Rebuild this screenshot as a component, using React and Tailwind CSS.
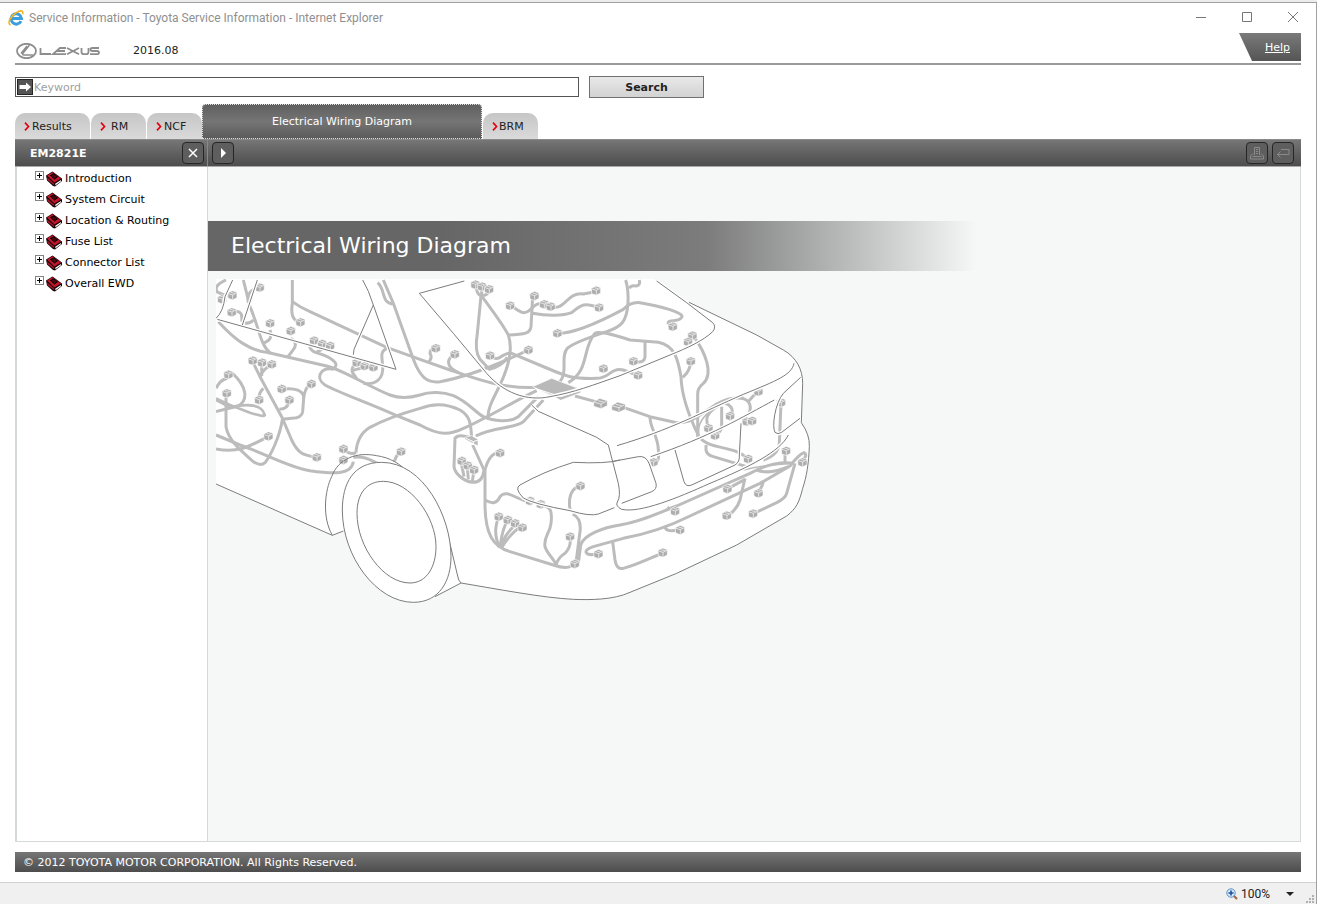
// src/App.jsx
import React, { useState } from "react";

const tabs = [
  { id: "results", label: "Results", width: "w-[75px]", gap: "gap-[2px]" },
  { id: "rm", label: "RM", width: "w-[55px]", gap: "gap-[5px]" },
  { id: "ncf", label: "NCF", width: "w-[55px]", gap: "gap-[2px]" },
  { id: "ewd", label: "Electrical Wiring Diagram", active: true },
  { id: "brm", label: "BRM", width: "w-[55px]", gap: "gap-px" },
];

const books = ["Introduction", "System Circuit", "Location & Routing", "Fuse List", "Connector List", "Overall EWD"];

// harness runs, three drawing units to a pixel
const wires = [
  "M25 155C80 215 120 240 170 247L350 288C400 300 480 352 540 375Q580 390 630 375C660 364 700 366 730 377C770 393 800 430 820 440C850 454 900 458 925 440L985 380",
  "M100 30L120 110C150 180 150 225 182 250",
  "M247 30V100Q240 145 262 154",
  "M247 95Q270 112 300 125L530 232L630 268L720 300C790 322 870 357 980 352",
  "M520 30L550 100L610 268C630 320 650 340 690 335Q800 315 955 240",
  "M503 38C528 60 512 98 548 102",
  "M372 298C330 290 315 325 345 345C390 370 480 400 560 437L630 465C690 498 720 495 760 475C820 450 900 400 980 362",
  "M438 548C440 515 450 490 480 472C530 445 570 432 630 415C680 395 720 405 750 420C785 440 782 470 785 505",
  "M532 235C512 242 514 255 518 285C522 330 495 345 460 340",
  "M432 285C415 310 440 315 440 328",
  "M425 303Q450 292 490 292",
  "M299 230C305 255 340 245 370 272Q385 284 372 296",
  "M320 246L350 232",
  "M242 205C268 220 255 235 232 262",
  "M180 180C190 215 165 215 160 220",
  "M128 275L150 320L215 440L245 510C265 552 280 555 315 561",
  "M155 280V318M185 284Q155 300 150 322M160 355Q145 370 147 388",
  "M215 358C255 352 282 362 281 385L278 425Q275 444 245 445L217 448M302 343Q285 350 281 385M238 390Q235 418 208 418",
  "M217 448C210 500 180 560 165 578Q152 590 130 575C90 540 55 510 48 470V370",
  "M18 495L90 525C170 552 230 590 300 602C370 612 425 615 430 575",
  "M18 537C80 548 110 535 175 499",
  "M18 355Q30 330 52 325M65 308C112 350 115 390 85 408L18 425",
  "M400 538Q422 556 438 548M572 545Q558 555 553 575M430 562C480 555 500 590 535 587",
  "M48 30Q8 48 22 66Q42 78 66 76M148 53C112 60 113 80 115 98M65 128C92 118 98 132 95 155M104 160Q122 160 130 150",
  "M657 275Q668 262 660 250Q660 238 675 235M745 308C705 290 710 265 735 252",
  "M813 78L802 190Q793 245 810 268L838 298Q875 290 892 262",
  "M797 45Q800 75 815 78Q838 75 836 55M815 48V78",
  "M815 78C850 125 880 165 895 195C910 240 895 290 870 345C850 385 830 420 835 445",
  "M840 258Q855 270 870 262Q890 248 905 250L1010 294C1070 320 1090 327 1160 325C1200 325 1200 292 1240 300L1275 313",
  "M895 195C945 193 960 190 963 170L968 80",
  "M905 107C940 138 952 130 968 112Q985 95 1008 103M1022 110C1065 125 1070 65 1120 72L1155 65M968 130C1010 138 1060 138 1085 128C1115 102 1125 98 1165 112",
  "M1045 190C1100 190 1180 150 1240 118Q1262 95 1290 98C1350 108 1420 128 1416 140C1410 160 1370 145 1375 162",
  "M1247 30Q1256 60 1254 100C1250 155 1235 170 1190 185Q1090 218 1072 235C1050 260 1075 305 1050 335",
  "M1258 55Q1262 45 1278 48Q1292 46 1288 30",
  "M1075 338C1140 300 1115 235 1155 190Q1170 180 1260 210L1345 217C1400 228 1405 280 1413 320Q1415 395 1468 502",
  "M1095 378L1165 397",
  "M1240 412L1320 440L1400 458Q1435 460 1462 440L1520 402C1560 380 1600 378 1615 395Q1625 410 1618 428M1615 395Q1630 375 1645 365",
  "M1320 440C1318 470 1345 500 1345 540Q1350 582 1328 580",
  "M1442 275Q1440 305 1418 322M1450 198C1485 245 1512 310 1480 340Q1462 355 1463 372V502",
  "M1305 215V262Q1302 280 1278 275",
  "M1497 472C1475 435 1510 415 1540 398Q1578 410 1562 438M1535 410V475Q1530 488 1516 495",
  "M1468 502C1500 540 1570 525 1612 565M1488 525V540Q1490 555 1510 560L1610 590",
  "M1713 400L1708 520Q1705 555 1660 570",
  "M1105 880L1112 825C1120 795 1180 772 1230 765C1290 755 1330 735 1400 708L1620 610Q1690 572 1750 580",
  "M1160 852C1125 860 1115 840 1150 830L1240 805C1320 790 1380 768 1440 738L1650 640L1740 588Q1765 555 1782 548Q1795 555 1775 575",
  "M1755 580L1730 670Q1726 685 1700 698L1632 730M1605 625L1590 690Q1580 720 1555 735M1555 655L1605 628M1660 635Q1655 655 1645 665",
  "M1725 545V580M1372 712L1392 724M1365 768Q1365 788 1405 780M1208 815L1215 870Q1220 900 1240 895C1280 885 1320 865 1358 849",
  "M1640 600Q1680 615 1735 590",
  "M785 505Q745 490 735 505L732 590C735 610 760 635 790 637Q818 637 822 600L788 525",
  "M868 548Q838 548 825 600V700C825 795 850 830 900 845L1030 885Q1080 902 1092 880",
  "M825 690Q858 710 870 680C890 655 920 690 958 696M995 706C1020 710 1028 720 1023 760C1020 790 1000 800 1005 830C1010 850 1035 870 1038 885Q1045 862 1065 850Q1085 830 1080 800",
  "M1110 648C1080 655 1075 690 1080 718M1088 732Q1115 745 1110 785L1098 878",
  "M797 498C850 470 920 475 940 455L1000 390",
  "M868 832C850 790 858 765 865 742M870 832C875 790 880 770 893 752M872 832C885 792 898 785 915 764M875 832C895 800 920 775 935 772",
  "M753 575L762 620M772 590L775 628M792 600L787 634",
];

// body lines, drawn over the harness
const lines = [
  "M458 30Q476 60 490 105L558 298L22 148",
  "M490 105L432 238L430 254",
  "M68 30L45 80Q40 125 18 145",
  "M142 30L97 165",
  "M763 33L628 70L730 190L830 310C880 368 950 395 1020 380C1090 368 1150 345 1230 317L1380 255C1430 235 1480 212 1508 185Q1520 170 1508 158L1430 98L1340 33",
  "M1752 280C1745 315 1700 332 1600 373C1480 425 1380 480 1221 527",
  "M1693 390C1600 440 1500 500 1322 560",
  "M1772 322L1720 370C1695 400 1685 470 1695 487Q1703 495 1715 487L1770 445",
  "M1735 495C1710 545 1620 590 1500 640C1400 685 1290 730 1235 718Q1215 708 1222 696Q1233 680 1225 640L1195 525L1160 502L985 424L965 405",
  "M1230 570Q1190 582 1090 577Q1000 605 930 645Q912 655 940 684Q970 702 1080 722Q1140 740 1165 732L1213 713",
  "M1210 574L1285 560Q1308 556 1318 582L1338 640Q1342 658 1325 665L1235 700",
  "M1395 540L1422 635Q1428 652 1445 645L1575 585Q1590 576 1588 555L1593 460",
];

const outline =
  "M1437 97L1640 195L1720 240C1760 262 1778 300 1778 340L1774 458Q1800 495 1798 530C1796 580 1790 620 1778 655C1768 695 1760 715 1730 738L1580 825L1400 910L1260 967C1210 990 1140 990 1090 988C1000 984 850 955 753 939";

const tyre = "M515 577C430 577 397 640 397 720C397 860 500 997 610 997C690 997 723 930 723 860C723 740 640 577 515 577Z";

const rim = "M520 634C470 634 441 670 441 730C441 830 520 939 600 939C650 939 678 890 678 830C678 740 600 634 520 634Z";

const plugs = [
  [36, 88], [67, 76], [149, 53], [65, 127], [180, 160], [242, 183], [271, 157], [312, 212], [336, 222], [360, 228],
  [128, 272], [156, 278], [185, 283], [55, 314], [50, 370], [147, 390], [215, 357], [238, 390], [304, 342], [175, 499],
  [320, 562], [400, 537], [400, 570], [573, 545], [440, 278], [464, 288], [490, 292], [677, 235], [734, 253],
  [796, 44], [816, 50], [837, 58], [900, 107], [973, 78], [1002, 103], [1022, 110], [1158, 62], [1167, 113],
  [1042, 190], [955, 240], [840, 257], [1180, 296], [1388, 170], [1447, 197], [1434, 216], [1442, 274], [1270, 274], [1284, 316],
  [1330, 577], [1495, 475], [1515, 497], [1560, 438], [1610, 455], [1626, 453], [1645, 365], [1713, 398], [1614, 567],
  [1728, 543], [1777, 577], [1358, 848], [1552, 657], [1645, 670], [1550, 737], [1629, 731], [1395, 724], [1410, 780],
  [755, 573], [773, 587], [792, 600], [870, 549], [866, 740], [893, 750], [915, 760], [937, 773], [960, 693], [992, 703],
  [1111, 648], [1080, 800], [1094, 882], [1165, 852],
];

const Plug = ({ x, y }) => (
  <g transform={`translate(${x} ${y})`}>
    <path d="M-14 -7L0 -14L14 -9V7L1 14L-13 9Z" fill="#adadad" stroke="#fff" strokeWidth="2" />
    <path d="M-12 -5L1 -1L13 -7M1 -1V13M-5 -9L7 -6" fill="none" stroke="#fff" strokeWidth="2" />
  </g>
);

const CarDrawing = () => (
  <svg viewBox="-6 3 1830 1020" className="block w-[610px] h-[340px]" role="img" aria-label="Vehicle wiring">
    <defs>
      <clipPath id="sheet">
        <rect x="18" y="27" width="1800" height="1000" />
      </clipPath>
    </defs>
    <g clipPath="url(#sheet)" fill="none" strokeLinejoin="round">
      <path
        d={`M18 27H1330L${outline.slice(1)}L675 980L560 990L400 783L367 796L18 642Z`}
        fill="#fff"
      />
      <g stroke="#bcbcbc" strokeWidth="9">
        {wires.map((d) => (
          <path key={d} d={d} />
        ))}
        <path d="M18 385L60 405L120 428Q172 445 163 432C155 405 115 400 60 412L18 390" strokeWidth="8" />
        <path d="M1468 502C1450 440 1530 395 1600 380" strokeWidth="5" />
        <path d="M1600 600Q1660 585 1740 580" strokeWidth="5" />
      </g>
      <path d="M968 350L1025 325L1112 358V368L1052 391L1038 383Z" fill="#b9b9b9" stroke="#fff" strokeWidth="2" />
      <path d="M975 355L1052 380L1110 362" stroke="#fff" strokeWidth="3" />
      <path d="M765 502L785 497L804 508V528L765 508Z" fill="#b9b9b9" stroke="#fff" strokeWidth="2" />
      <path d="M768 505L790 515L804 510M790 515V525" stroke="#fff" strokeWidth="3" />
      {plugs.map(([x, y]) => (
        <Plug key={`${x}-${y}`} x={x} y={y} />
      ))}
      {[[1171, 400], [1225, 411]].map(([x, y]) => (
        <g key={x} transform={`translate(${x} ${y})`}>
          <path d="M-20 -4L-2 -15L21 -8V7L2 16L-20 9Z" fill="#adadad" stroke="#fff" strokeWidth="2" />
          <path d="M-18 -3L2 2L18 -6M2 2V13M-8 -8L10 -4" stroke="#fff" strokeWidth="2" />
        </g>
      ))}
      <g stroke="#fff" strokeWidth="11">
        {lines.map((d) => (
          <path key={d} d={d} />
        ))}
      </g>
      <g stroke="#7c7c7c" strokeWidth="3">
        {lines.map((d) => (
          <path key={d} d={d} />
        ))}
        <path d={outline} />
        <path d="M18 642L367 796L400 783" />
        <path d="M367 796C335 740 345 660 365 620C385 565 440 545 500 557C540 563 570 580 600 613C665 680 705 765 722 830L743 918Q745 932 753 939L675 980" />
      </g>
      <path d={tyre} fill="#fff" stroke="#7c7c7c" strokeWidth="3" />
      <path d={rim} fill="#fff" stroke="#7c7c7c" strokeWidth="3" />
    </g>
  </svg>
);

const ExplorerIcon = () => (
  <svg viewBox="0 0 16 16" className="w-4 h-4" aria-hidden="true">
    <path d="M13 11.200A5.200 5.200 0 1 1 13.500 8.600H4.400" fill="none" stroke="#3a9fdc" strokeWidth="3" />
    <path d="M2.600 15C-1 14 2 6.500 8 2.800C12 .2 16 -.2 14.600 4.200" fill="none" stroke="#f0b429" strokeWidth="1.600" />
  </svg>
);

const LexusLogo = () => (
  <svg viewBox="0 0 84 16" className="w-[84px] h-4" role="img" aria-label="Lexus" fill="none" stroke="#8d8d8d">
    <ellipse cx="10.500" cy="8" rx="9.500" ry="7.200" strokeWidth="1.800" />
    <path d="M13.500 2L6.800 10.500Q6 12 8 12H17M11 3L5 10.500" strokeWidth="1.500" />
    <g strokeWidth="1.800">
      <path d="M24.500 5V11H35" />
      <path d="M50 5H44L37 11.200H50M41 8H49" />
      <path d="M51 5L63 11.200M63 5L51 11.200" />
      <path d="M65.500 5V9Q65.500 11.200 68 11.200H70Q72.500 11.200 72.500 9V5" />
      <path d="M83 5H76.500Q74.500 5 74.500 6.500T76.500 8H81Q83 8 83 9.600T81 11.200H74" />
    </g>
  </svg>
);

const BookIcon = () => (
  <svg viewBox="0 0 16 16" className="w-4 h-4" aria-hidden="true">
    <path d="M0 4.500L6.500 0.500L16 7.500V10L9 15.500L7 15L1 9.500Z" fill="#1a0508" />
    <path d="M1 4.500L6.500 1.200L15 7.500L8.500 11.500Z" fill="#c4142b" />
    <path d="M4.500 4.500L7.500 2.800L11.500 5.800L8.500 8Z" fill="#4a0710" stroke="#000" />
    <path d="M1.200 6.500L8 12.500V14L1.500 9Z" fill="#b3122a" />
    <path d="M9.200 12.800L15 9V10.200L9.500 14.300Z" fill="#fff" />
  </svg>
);

const Chevron = () => (
  <svg viewBox="0 0 6 9" className="w-[6px] h-[9px] shrink-0" aria-hidden="true">
    <path d="M1 .7L4.500 4.500L1 8.300" fill="none" stroke="#e60012" strokeWidth="1.700" />
  </svg>
);

const ToolButton = ({ label, children, disabled }) => (
  <button
    aria-label={label}
    disabled={disabled}
    className="w-[22px] h-[22px] rounded border border-[#262626] bg-[#5e5e5e] text-white flex items-center justify-center disabled:text-[#8a8a8a]"
  >
    {children}
  </button>
);

const App = () => {
  const [keyword, setKeyword] = useState("");
  const [activeTab, setActiveTab] = useState("ewd");

  return (
    <div className="min-h-screen flex flex-col bg-white border-t-2 border-[#ececec] font-['DejaVu_Sans',Verdana,sans-serif] text-[11px] leading-4 text-[#222]">
      <div className="flex-1 flex flex-col border-t border-r border-[#a0a0a0]">
        {/* Title bar */}
        <div className="h-[30px] flex items-center justify-between pl-2 pr-[17px] font-[Roboto,'Segoe_UI',sans-serif] text-[12px] text-[#8f8f8f]">
          <div className="flex items-center gap-[5px]">
            <ExplorerIcon />
            <span>Service Information - Toyota Service Information - Internet Explorer</span>
          </div>
          <div className="flex items-center gap-[34px]">
            <button aria-label="Minimize">
              <svg viewBox="0 0 12 12" className="w-3 h-3" stroke="#777"><path d="M1 5.500H11" /></svg>
            </button>
            <button aria-label="Maximize">
              <svg viewBox="0 0 12 12" className="w-3 h-3" fill="none" stroke="#777"><path d="M1.500 .5H10.500V9.500H1.500Z" /></svg>
            </button>
            <button aria-label="Close">
              <svg viewBox="0 0 12 12" className="w-3 h-3" stroke="#777"><path d="M1 0L11 10M11 0L1 10" /></svg>
            </button>
          </div>
        </div>

        <div className="flex-1 flex flex-col px-[15px]">
          {/* Header */}
          <header className="h-8 flex items-start justify-between border-b-2 border-[#999]">
            <div className="flex items-center gap-[33px] pt-[9px] pl-px">
              <LexusLogo />
              <span className="pt-px">2016.08</span>
            </div>
            <a
              href="#help"
              className="w-[62px] h-7 pl-[15px] pt-px flex items-center justify-center text-white underline bg-linear-to-b from-[#7a7a7a] to-[#555] [clip-path:polygon(0_0,100%_0,100%_100%,13px_100%)]"
            >
              Help
            </a>
          </header>

          {/* Search */}
          <form className="flex items-center gap-[10px] pt-[11px]" onSubmit={(e) => e.preventDefault()}>
            <label className="flex items-center w-[564px] h-5 border border-[#555] pl-px">
              <svg viewBox="0 0 16 16" className="w-4 h-4 shrink-0" aria-hidden="true">
                <rect width="16" height="16" fill="#262626" />
                <rect x="1" y="1" width="14" height="14" fill="#555" />
                <path d="M2.500 6H9V3.500L14 8L9 12.500V10H2.500Z" fill="#fff" />
              </svg>
              <input
                aria-label="Keyword"
                value={keyword}
                onChange={(e) => setKeyword(e.target.value)}
                placeholder="Keyword"
                className="flex-1 min-w-0 pl-px pt-px outline-none placeholder:text-[#a0a0a0]"
              />
            </label>
            <button className="w-[115px] h-[22px] pt-px border border-[#707070] bg-linear-to-b from-[#e9e9e9] to-[#d2d2d2] font-bold">
              Search
            </button>
          </form>

          {/* Tabs */}
          <nav className="flex items-end gap-px h-[41px]">
            {tabs.map((tab) =>
              tab.active ? (
                <button
                  key={tab.id}
                  onClick={() => setActiveTab(tab.id)}
                  aria-current={activeTab === tab.id}
                  className="w-[280px] h-[35px] pt-px -ml-px border border-dotted border-[#ddd] rounded-t-sm bg-linear-to-b from-[#606060] via-[#757575] to-[#5c5c5c] text-white"
                >
                  {tab.label}
                </button>
              ) : (
                <button
                  key={tab.id}
                  onClick={() => setActiveTab(tab.id)}
                  className={`${tab.width} ${tab.gap} h-[26px] pl-[9px] pt-px flex items-center rounded-t-[10px] bg-linear-to-b from-[#c6c6c6] to-[#dadada]`}
                >
                  <Chevron />
                  {tab.label}
                </button>
              )
            )}
          </nav>

          {/* Toolbar */}
          <div className="h-7 flex items-center border-y border-[#8a8a8a] border-b-[#aaa] bg-linear-to-b from-[#767676] to-[#4d4d4d]">
            <div className="w-[193px] h-full flex items-center justify-between pl-[15px] pr-[3px] border-r border-[#888]">
              <span className="pt-px font-bold text-white">EM2821E</span>
              <ToolButton label="Close contents">
                <svg viewBox="0 0 10 10" className="w-[10px] h-[10px]" stroke="currentColor" strokeWidth="1.500"><path d="M1 1L9 9M9 1L1 9" /></svg>
              </ToolButton>
            </div>
            <div className="flex-1 flex items-center gap-1 pl-1 pr-[7px]">
              <ToolButton label="Show">
                <svg viewBox="0 0 10 10" className="w-[10px] h-[10px]" fill="currentColor"><path d="M3 0L8 5L3 10Z" /></svg>
              </ToolButton>
              <div className="flex-1" />
              <ToolButton label="Print" disabled>
                <svg viewBox="0 0 14 14" className="w-[14px] h-[14px]" fill="none" stroke="currentColor">
                  <path d="M4.500 9V1.500H9.500V9M3 7.500L.5 10V13H13.500V10L11 7.500M2.500 10.500H11.500M6 3.500H8M6 5.500H8M6 7.500H8" />
                </svg>
              </ToolButton>
              <ToolButton label="Back" disabled>
                <svg viewBox="0 0 14 14" className="w-[14px] h-[14px]" fill="none" stroke="currentColor">
                  <path d="M5 3.500H13V8.500H1.500M4.500 5.500L1.500 8.500L4.500 11.500" />
                </svg>
              </ToolButton>
            </div>
          </div>

          {/* Contents and page */}
          <div className="flex-1 flex border-l-2 border-r border-b border-[#d5d9d9]">
            <aside className="w-[191px] border-r border-[#d5d9d9] text-black">
              <ul className="pt-px">
                {books.map((book) => (
                  <li key={book} className="h-[21px] flex items-center pl-[18px]">
                    <button
                      aria-label={`Expand ${book}`}
                      className="w-[9px] h-[9px] mb-[7px] border border-[#848484] flex items-center justify-center"
                    >
                      <svg viewBox="0 0 5 5" className="w-[5px] h-[5px]" stroke="#000"><path d="M0 2.500H5M2.500 0V5" /></svg>
                    </button>
                    <a href="#book" className="flex items-center gap-[3px] pl-[2px] whitespace-nowrap">
                      <BookIcon />
                      <span className="pt-px">{book}</span>
                    </a>
                  </li>
                ))}
              </ul>
            </aside>
            <main className="flex-1 bg-[#f6f8f8] pt-[54px]">
              <h1 className="max-w-[768px] h-[50px] pl-[23px] flex items-center text-[22px] leading-7 text-white bg-linear-to-r from-[#666] from-30% via-[#7c7c7c] via-65% to-[#f6f8f8]">
                Electrical Wiring Diagram
              </h1>
              <CarDrawing />
            </main>
          </div>

          <footer className="my-[10px] h-5 pl-2 pt-px flex items-center text-white bg-linear-to-b from-[#767676] to-[#4d4d4d]">
            © 2012 TOYOTA MOTOR CORPORATION. All Rights Reserved.
          </footer>
        </div>

        {/* Status bar */}
        <div className="h-[22px] flex items-center justify-end border-t border-[#d0d0d0] bg-[#f0f0f0] font-[Roboto,'Segoe_UI',sans-serif] text-[12px]">
          <button className="flex items-center gap-[3px]">
            <svg viewBox="0 0 12 12" className="w-3 h-3" aria-hidden="true">
              <path d="M7.500 7.500L11 11" stroke="#a0694a" strokeWidth="2.200" />
              <circle cx="5" cy="5" r="4.200" fill="#d6ebfb" stroke="#5b8fc4" />
              <path d="M5 2.500V7.500M2.500 5H7.500" stroke="#1c4fa0" strokeWidth="1.600" />
            </svg>
            100%
          </button>
          <button aria-label="Zoom level" className="pl-4">
            <svg viewBox="0 0 8 4" className="w-2 h-1"><path d="M0 0H8L4 4Z" fill="#222" /></svg>
          </button>
          <svg viewBox="0 0 9 9" className="w-[9px] h-[9px] ml-3 mr-px self-end" fill="#b0b0b0" aria-hidden="true">
            <path d="M6 0h2v2h-2zM3 3h2v2h-2zM6 3h2v2h-2zM0 6h2v2h-2zM3 6h2v2h-2zM6 6h2v2h-2z" />
          </svg>
        </div>
      </div>
    </div>
  );
};

export default App;
